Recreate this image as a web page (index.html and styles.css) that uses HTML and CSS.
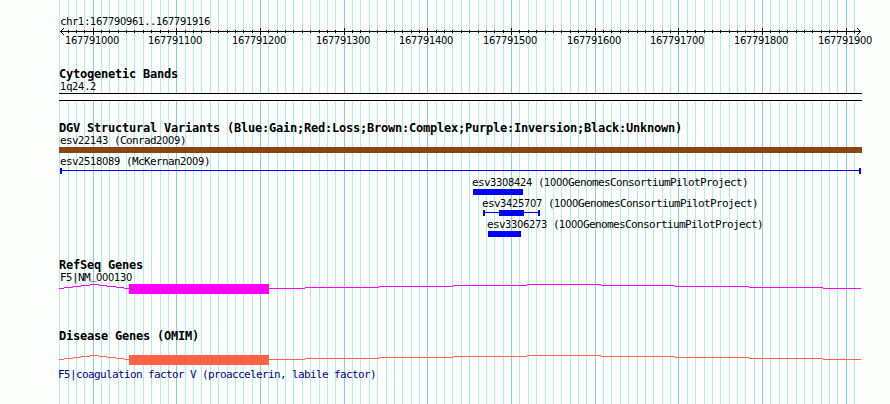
FILE: index.html
```html
<!DOCTYPE html>
<html lang="en">
<head>
<meta charset="utf-8">
<title>chr1:167790961..167791916</title>
<link rel="stylesheet" href="styles.css">
</head>
<body>
<main class="browser">
  <svg class="grid" id="grid" width="890" height="404" shape-rendering="crispEdges"></svg>

  <section class="track ruler">
    <div class="label">chr<b>1</b>:<b>167790961</b>..<b>167791916</b></div>
    <svg class="glyph" id="ruler" width="890" height="19"></svg>
  </section>

  <section class="track cyto">
    <h2>Cytogenetic Bands</h2>
    <div class="label"><b>1</b>q<b>24</b>.<b>2</b></div>
    <div class="band"></div>
  </section>

  <section class="track variants">
    <h2>DGV Structural Variants (Blue:Gain;Red:Loss;Brown:Complex;Purple:Inversion;Black:Unknown)</h2>
    <div class="variant">
      <div class="label">esv<b>22143</b> (Conrad<b>2009</b>)</div>
      <svg class="glyph brown" width="890" height="6" shape-rendering="crispEdges"><rect x="59" width="803" height="6"/></svg>
    </div>
    <div class="variant">
      <div class="label">esv<b>2518089</b> (McKernan<b>2009</b>)</div>
      <svg class="glyph blue" width="890" height="6" shape-rendering="crispEdges"><path d="M60 0h2v2h797v-2h2v6h-2v-3H62v3h-2z"/></svg>
    </div>
    <div class="variant">
      <div class="label at-a">esv<b>3308424</b> (<b>1000</b>GenomesConsortiumPilotProject)</div>
      <svg class="glyph blue" width="890" height="6" shape-rendering="crispEdges"><rect x="473" width="50" height="6"/></svg>
    </div>
    <div class="variant">
      <div class="label at-b">esv<b>3425707</b> (<b>1000</b>GenomesConsortiumPilotProject)</div>
      <svg class="glyph blue" width="890" height="6" shape-rendering="crispEdges"><path d="M483 0h2v2h14v-2h25v2h14v-2h2v6h-2v-3h-14v3h-25v-3h-14v3h-2z"/></svg>
    </div>
    <div class="variant">
      <div class="label at-c">esv<b>3306273</b> (<b>1000</b>GenomesConsortiumPilotProject)</div>
      <svg class="glyph blue" width="890" height="6" shape-rendering="crispEdges"><rect x="488" width="33" height="6"/></svg>
    </div>
  </section>

  <section class="track refseq">
    <h2>RefSeq Genes</h2>
    <div class="label">F<b>5</b>|NM<span class="underscore">_</span><b>000130</b></div>
    <svg class="glyph gene magenta" width="890" height="10" shape-rendering="crispEdges"></svg>
  </section>

  <section class="track omim">
    <h2>Disease Genes (OMIM)</h2>
    <svg class="glyph gene tomato" width="890" height="10" shape-rendering="crispEdges"></svg>
    <div class="label navy">F<b>5</b>|coagulation factor V (proaccelerin, labile factor)</div>
  </section>
</main>
<script src="script.js"></script>
</body>
</html>
```
FILE: styles.css
```css
body {
  margin: 0;
  background: #fdfffc;
  color: #000;
}

.browser {
  position: relative;
  width: 890px;
  height: 404px;
  overflow: hidden;
  display: flow-root;
}

.grid {
  position: absolute;
  top: 0;
  left: 0;
}

.grid .minor { fill: #afeeea; }
.grid .major { fill: #87ceeb; }

.track { position: relative; }
.ruler { margin-top: 15px; }
.cyto { margin-top: 20px; }
.variants { margin-top: 20px; }
.refseq { margin-top: 21px; }
.omim { margin-top: 35px; }

h2 {
  margin: 0 0 0 59px;
  height: 13px;
  font: bold 12px/14px "DejaVu Sans Mono", monospace;
  letter-spacing: -0.225px;
  white-space: pre;
}

.label {
  margin-left: 60px;
  height: 13px;
  font: 11px/13px "DejaVu Sans Mono", monospace;
  letter-spacing: -0.622px;
  white-space: pre;
}

.label b,
.coord {
  font-family: "DejaVu Sans Condensed", "DejaVu Sans", sans-serif;
  font-stretch: condensed;
  font-weight: normal;
  font-size: 11px;
  letter-spacing: -0.3px;
}

.at-a { margin-left: 472px; }
.at-b { margin-left: 482px; }
.at-c { margin-left: 487px; }

/* Keeps the underscore clear of the intron line below it. */
.underscore {
  display: inline-block;
  line-height: 1;
  transform: translateY(-2px);
}

.navy {
  margin: 3px 0 0 58px;
  color: #00008b;
}

.glyph { display: block; }
.brown { fill: #8b4513; }
.blue { fill: #0000ff; }
.magenta { fill: #ff00ff; }
.tomato { fill: #ff6347; }

.band {
  margin-left: 59px;
  width: 803px;
  height: 6px;
  background: #fdfffc;
  border-top: 1px solid #000;
  border-bottom: 1px solid #000;
}

.variant + .variant { margin-top: 2px; }
.omim .gene { margin-top: 13px; }
```
FILE: script.js
```js
// Grid lines fall every 10 bp; every tenth one from 167791000 is major.
const xOf = n => Math.floor(93.15 + n * 8.368);
let grid = '';
let ruler = '<g shape-rendering="crispEdges"><rect x="60" y="3" width="801" height="1"/>';
let coords = '';
for (let n = -4; n <= 91; n++) {
  const x = xOf(n);
  const major = n % 10 === 0;
  grid += `<rect class="${major ? 'major' : 'minor'}" x="${x}" y="0" width="1" height="404"/>`;
  if (n > -4) {
    ruler += `<rect x="${x}" y="${major ? 0 : 2}" width="1" height="${major ? 7 : 3}"/>`;
  }
  if (major) {
    coords += `<text class="coord" x="${x - 28}" y="16">${167791000 + n * 10}</text>`;
  }
}
// Arrow heads at both ends of the ruler.
for (let i = 1; i <= 3; i++) {
  for (const y of [3 - i, 3 + i]) {
    ruler += `<rect x="${60 + i}" y="${y}" width="1" height="1"/><rect x="${860 - i}" y="${y}" width="1" height="1"/>`;
  }
}
document.getElementById('grid').innerHTML = grid;
document.getElementById('ruler').innerHTML = ruler + '</g>' + coords;

// Introns are stepped hats: [x start, x end, y].
const steps = [
  [59, 64, 4], [64, 73, 3], [73, 81, 2], [81, 90, 1], [90, 99, 0],
  [99, 107, 1], [107, 116, 2], [116, 124, 3], [124, 129, 4],
  [269, 305, 4], [305, 379, 3], [379, 453, 2], [453, 527, 1], [527, 601, 0],
  [601, 675, 1], [675, 749, 2], [749, 823, 3], [823, 861, 4]
];
document.querySelectorAll('.gene').forEach(g => {
  g.innerHTML = '<rect x="129" y="0" width="140" height="10"/>' +
    steps.map(([a, b, y]) => `<rect x="${a}" y="${y}" width="${b - a}" height="1"/>`).join('');
});
```
